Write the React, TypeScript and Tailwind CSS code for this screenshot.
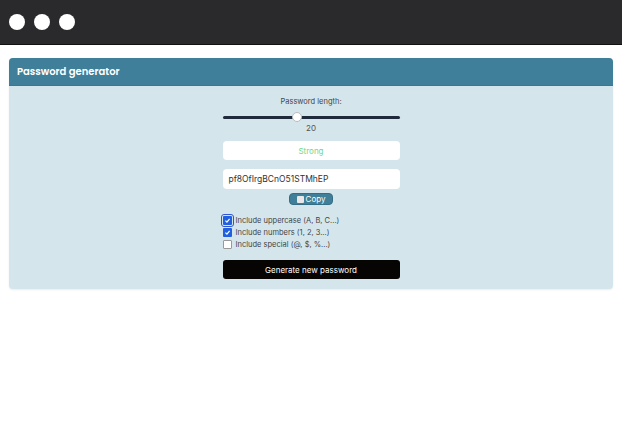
import React from "react";

export default function App() {
  return (
    <div className="w-[622px] h-[436px] bg-white" style={{ fontFamily: "Inter, 'Noto Sans', sans-serif" }}>
      <div className="h-[45px] bg-[#2a2a2c] border-b border-[#111] flex items-center gap-[9px] pl-[9px]">
        <div className="w-[16px] h-[16px] rounded-full bg-white" />
        <div className="w-[16px] h-[16px] rounded-full bg-white" />
        <div className="w-[16px] h-[16px] rounded-full bg-white" />
      </div>
      <div className="px-[9px] pt-[13px]">
        <div className="rounded-[4px] overflow-hidden bg-[#d4e6ec] shadow-[0_1px_2px_rgba(0,0,0,0.08)]">
          <div className="h-[28px] bg-[#3f7f99] flex items-center px-[8px] border-b border-[#3a7890]">
            <span className="text-white text-[10px] font-semibold" style={{ fontFamily: "Poppins, 'Open Sans', sans-serif" }}>Password generator</span>
          </div>
          <div className="flex justify-center pt-[11px] pb-[10px]">
            <div className="w-[177px] flex flex-col items-center">
              <div className="text-[7.5px] text-[#444] leading-[10px]">Password length:</div>
              <div className="relative w-full h-[12px] mt-[4px] flex items-center">
                <div className="w-full h-[3px] rounded-full bg-[#1f2a3c]" />
                <div className="absolute left-[69px] top-[1px] w-[10px] h-[10px] rounded-full bg-white border border-[#bbb]" />
              </div>
              <div className="text-[8px] text-[#555] leading-[10px] mt-[0px]">20</div>
              <div className="w-full h-[19px] mt-[8px] bg-white rounded-[4px] flex items-center justify-center text-[8px] text-[#6fd88a]">Strong</div>
              <div className="w-full h-[20px] mt-[9px] bg-white rounded-[4px] flex items-center px-[6px] text-[8.5px] text-[#333]">pf8OfIrgBCnO51STMhEP</div>
              <div className="mt-[4px] h-[12px] w-[44px] rounded-[4px] bg-[#3f7f99] border border-[#356d84] flex items-center justify-center gap-[2px] text-white text-[8px]">
                <span className="inline-block w-[7px] h-[7px] bg-[#e8e8e8] rounded-[1px]" />
                <span>Copy</span>
              </div>
              <div className="w-full mt-[11px] flex flex-col gap-[3px] text-[7.5px] text-[#444]">
                <label className="flex items-center gap-[3px] h-[9px]">
                  <span className="w-[9px] h-[9px] rounded-[1px] bg-[#1f5fe0] outline outline-1 outline-offset-1 outline-[#2f55d4] flex items-center justify-center">
                    <svg width="7" height="7" viewBox="0 0 10 10"><path d="M2 5.2 L4.2 7.4 L8 2.8" stroke="white" strokeWidth="1.8" fill="none" /></svg>
                  </span>
                  <span className="ml-[1px]">Include uppercase (A, B, C...)</span>
                </label>
                <label className="flex items-center gap-[3px] h-[9px]">
                  <span className="w-[9px] h-[9px] rounded-[1px] bg-[#1f5fe0] flex items-center justify-center">
                    <svg width="7" height="7" viewBox="0 0 10 10"><path d="M2 5.2 L4.2 7.4 L8 2.8" stroke="white" strokeWidth="1.8" fill="none" /></svg>
                  </span>
                  <span className="ml-[1px]">Include numbers (1, 2, 3...)</span>
                </label>
                <label className="flex items-center gap-[3px] h-[9px]">
                  <span className="w-[9px] h-[9px] rounded-[1px] bg-white border border-[#999]" />
                  <span className="ml-[1px]">Include special (@, $, %...)</span>
                </label>
              </div>
              <div className="w-full h-[19px] mt-[11px] bg-[#070404] rounded-[3px] flex items-center justify-center text-white text-[8px]">Generate new password</div>
            </div>
          </div>
        </div>
      </div>
    </div>
  );
}
